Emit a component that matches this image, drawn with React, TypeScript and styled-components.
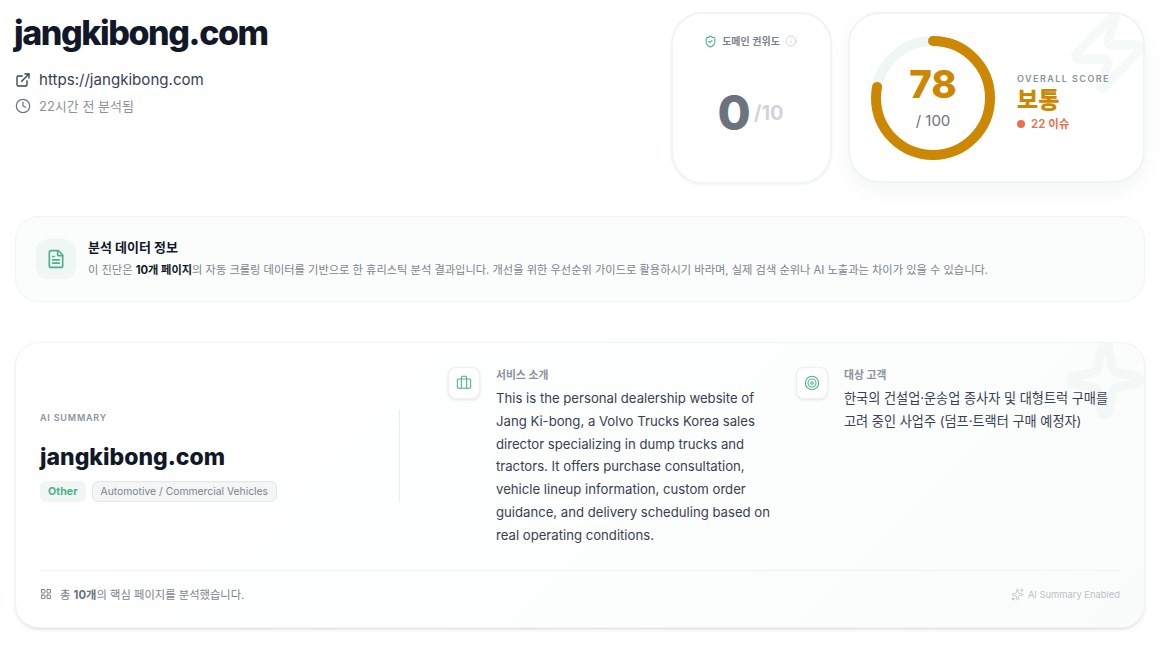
import React from 'react'
import styled, { createGlobalStyle } from 'styled-components'
import { Briefcase, Clock, ExternalLink, FileText, Info, LayoutGrid, ShieldCheck, Sparkle, Sparkles, Target, Zap } from 'lucide-react'

const Global = createGlobalStyle`
  html, body {
    margin: 0;
    background: #fff;
    font-family: Inter, "Noto Sans CJK KR", sans-serif;
    color: #111827;
  }
  * { box-sizing: border-box; }
`

const SCORE = 78
const R = 57
const CIRC = 2 * Math.PI * R

function App() {
  return (
    <Page>
      <Global />
      <Header>
        <SiteInfo>
          <SiteTitle>jangkibong.com</SiteTitle>
          <UrlRow>
            <ExternalLink size={16} strokeWidth={2} color="#374151" />
            <span>https://jangkibong.com</span>
          </UrlRow>
          <TimeRow>
            <Clock size={16} strokeWidth={1.8} color="#6b7280" />
            <span>22시간 전 분석됨</span>
          </TimeRow>
        </SiteInfo>
        <AuthorityCard>
          <AuthorityLabel>
            <ShieldCheck size={13} strokeWidth={2} color="#4cb08a" />
            <span>도메인 권위도</span>
            <Info size={12} strokeWidth={1.6} color="#c4c9cf" />
          </AuthorityLabel>
          <AuthorityValue>
            <strong>0</strong>
            <span>/10</span>
          </AuthorityValue>
        </AuthorityCard>
        <ScoreCard>
          <GhostZap>
            <Zap size={86} strokeWidth={2.6} color="#f5f9f7" />
          </GhostZap>
          <Ring>
            <svg width="124" height="124" viewBox="0 0 124 124">
              <circle cx="62" cy="62" r={R} fill="none" stroke="#f0f6f4" strokeWidth="10" />
              <circle
                cx="62"
                cy="62"
                r={R}
                fill="none"
                stroke="#cd8803"
                strokeWidth="10"
                strokeLinecap="round"
                strokeDasharray={`${(CIRC * SCORE) / 100} ${CIRC}`}
                transform="rotate(-90 62 62)"
              />
            </svg>
            <RingText>
              <RingValue>{SCORE}</RingValue>
              <RingMax>/ 100</RingMax>
            </RingText>
          </Ring>
          <ScoreInfo>
            <ScoreLabel>OVERALL SCORE</ScoreLabel>
            <ScoreGrade>보통</ScoreGrade>
            <IssueRow>
              <IssueDot />
              <span>22 이슈</span>
            </IssueRow>
          </ScoreInfo>
        </ScoreCard>
      </Header>

      <NoticeCard>
        <NoticeIcon>
          <FileText size={20} strokeWidth={2} color="#4cb08a" />
        </NoticeIcon>
        <div>
          <NoticeTitle>분석 데이터 정보</NoticeTitle>
          <NoticeText>
            이 진단은 <b>10개 페이지</b>의 자동 크롤링 데이터를 기반으로 한 휴리스틱 분석 결과입니다. 개선을 위한 우선순위 가이드로 활용하시기 바라며, 실제 검색 순위나 AI 노출과는 차이가 있을 수 있습니다.
          </NoticeText>
        </div>
      </NoticeCard>

      <SummaryCard>
        <GhostSparkle>
          <Sparkle size={84} strokeWidth={2.6} color="#f3f7f6" />
        </GhostSparkle>
        <SummaryBody>
          <SummaryLeft>
            <SummaryEyebrow>AI SUMMARY</SummaryEyebrow>
            <SummaryName>jangkibong.com</SummaryName>
            <TagRow>
              <GreenTag>Other</GreenTag>
              <GrayTag>Automotive / Commercial Vehicles</GrayTag>
            </TagRow>
          </SummaryLeft>
          <SummaryColumn>
            <ColumnIcon>
              <Briefcase size={16} strokeWidth={1.6} color="#4cb08a" />
            </ColumnIcon>
            <div>
              <ColumnLabel>서비스 소개</ColumnLabel>
              <ColumnText>
                This is the personal dealership website of Jang Ki-bong, a Volvo Trucks Korea sales director specializing in dump trucks and tractors. It offers purchase consultation, vehicle lineup information, custom order guidance, and delivery scheduling based on real operating conditions.
              </ColumnText>
            </div>
          </SummaryColumn>
          <SummaryColumn $last>
            <ColumnIcon>
              <Target size={16} strokeWidth={1.6} color="#4cb08a" />
            </ColumnIcon>
            <div>
              <ColumnLabel>대상 고객</ColumnLabel>
              <ColumnText>
                한국의 건설업·운송업 종사자 및 대형트럭 구매를 고려 중인 사업주 (덤프·트랙터 구매 예정자)
              </ColumnText>
            </div>
          </SummaryColumn>
        </SummaryBody>
        <SummaryFooter>
          <FooterNote>
            <LayoutGrid size={12} strokeWidth={1.8} color="#6b7280" />
            <span>
              총 <b>10개</b>의 핵심 페이지를 분석했습니다.
            </span>
          </FooterNote>
          <FooterBadge>
            <Sparkles size={13} strokeWidth={1.6} color="#b9bfc6" />
            <span>AI Summary Enabled</span>
          </FooterBadge>
        </SummaryFooter>
      </SummaryCard>
    </Page>
  )
}

const Page = styled.div`
  width: 1166px;
  height: 648px;
  overflow: hidden;
  padding: 12px 21px 0 15px;
`

const Header = styled.header`
  display: flex;
  align-items: flex-start;
  height: 172px;
`

const SiteInfo = styled.div`
  flex: 1;
`

const SiteTitle = styled.h1`
  margin: 0 0 0 -1px;
  font-size: 34px;
  line-height: 41px;
  font-weight: 800;
  letter-spacing: -1.42px;
  color: #111827;
`

const UrlRow = styled.div`
  display: flex;
  align-items: center;
  gap: 8px;
  margin-top: 15px;
  font-size: 15.1px;
  line-height: 24px;
  color: #374151;
`

const TimeRow = styled.div`
  display: flex;
  align-items: center;
  gap: 8px;
  margin-top: 4px;
  font-size: 13px;
  line-height: 20px;
  color: #8b929c;
`

const AuthorityCard = styled.section`
  width: 161px;
  height: 172px;
  margin-right: 16px;
  padding-top: 20px;
  border: 2px solid #eef5f2;
  border-radius: 32px;
  background: #fff;
  box-shadow: 0 1px 3px rgba(16, 60, 50, 0.06);
`

const AuthorityLabel = styled.div`
  display: flex;
  align-items: center;
  justify-content: center;
  gap: 5px;
  padding-right: 2px;
  font-size: 10px;
  line-height: 14px;
  font-weight: 600;
  color: #7b838d;
`

const AuthorityValue = styled.div`
  display: flex;
  align-items: center;
  justify-content: center;
  margin-top: 35px;
  padding-right: 2px;
  strong {
    font-size: 48px;
    line-height: 60px;
    font-weight: 800;
    color: #6b7280;
  }
  span {
    margin-left: 3px;
    font-size: 20px;
    font-weight: 700;
    color: #d1d5db;
  }
`

const ScoreCard = styled.section`
  position: relative;
  display: flex;
  align-items: center;
  gap: 22px;
  width: 297px;
  height: 171px;
  padding-left: 21px;
  overflow: hidden;
  border: 2px solid #eef5f2;
  border-radius: 32px;
  background: #fff;
  box-shadow: 0 8px 20px rgba(16, 90, 70, 0.05);
`

const GhostZap = styled.div`
  position: absolute;
  top: -5px;
  right: -8px;
  line-height: 0;
`

const Ring = styled.div`
  position: relative;
  width: 124px;
  height: 124px;
  flex: none;
`

const RingText = styled.div`
  position: absolute;
  inset: 0;
  display: flex;
  flex-direction: column;
  align-items: center;
  justify-content: center;
`

const RingValue = styled.div`
  font-size: 38.5px;
  line-height: 40px;
  font-weight: 800;
  color: #cd8803;
`

const RingMax = styled.div`
  margin-top: 7px;
  font-size: 15px;
  line-height: 20px;
  color: #6b7280;
`

const ScoreInfo = styled.div`
  position: relative;
  padding-top: 8px;
`

const ScoreLabel = styled.div`
  font-size: 9px;
  line-height: 13px;
  font-weight: 600;
  letter-spacing: 1.45px;
  color: #8b929c;
`

const ScoreGrade = styled.div`
  margin-top: 1px;
  font-size: 23px;
  line-height: 28px;
  font-weight: 800;
  color: #cd8803;
`

const IssueRow = styled.div`
  display: flex;
  align-items: center;
  gap: 6px;
  margin-top: 2px;
  font-size: 11.5px;
  line-height: 16px;
  font-weight: 600;
  color: #ea6f4f;
`

const IssueDot = styled.i`
  width: 8px;
  height: 8px;
  border-radius: 50%;
  background: #ea6f4f;
`

const NoticeCard = styled.section`
  display: flex;
  align-items: center;
  gap: 12px;
  height: 86px;
  margin-top: 32px;
  padding-left: 20px;
  border: 1px solid #eef5f2;
  border-radius: 24px;
  background: #fbfdfc;
`

const NoticeIcon = styled.div`
  display: flex;
  align-items: center;
  justify-content: center;
  width: 40px;
  height: 40px;
  border-radius: 12px;
  background: #f0f6f4;
`

const NoticeTitle = styled.div`
  font-size: 13px;
  line-height: 18px;
  font-weight: 700;
  color: #111827;
`

const NoticeText = styled.p`
  margin: 6px 0 2px;
  font-size: 11.24px;
  line-height: 16px;
  color: #7b838d;
  b {
    font-weight: 700;
    color: #111827;
  }
`

const SummaryCard = styled.section`
  position: relative;
  height: 286px;
  margin-top: 40px;
  padding: 24px 24px 0;
  overflow: hidden;
  border: 1px solid #eef5f2;
  border-radius: 24px;
  background: linear-gradient(135deg, #fff, #fafcfc);
  box-shadow: 0 2px 4px -2px rgba(16, 50, 45, 0.3);
`

const GhostSparkle = styled.div`
  position: absolute;
  top: -5px;
  right: -3px;
  line-height: 0;
`

const SummaryBody = styled.div`
  position: relative;
  display: flex;
  height: 203px;
`

const SummaryLeft = styled.div`
  display: flex;
  flex-direction: column;
  flex: none;
  width: 360px;
  height: 92px;
  margin: 43px 48px 0 0;
  padding-top: 1px;
  border-right: 1px solid #e8edeb;
`

const SummaryEyebrow = styled.div`
  font-size: 9px;
  line-height: 14px;
  font-weight: 600;
  letter-spacing: 0.8px;
  color: #8b929c;
`

const SummaryName = styled.div`
  margin-top: 18px;
  font-size: 23px;
  line-height: 28px;
  font-weight: 800;
  color: #111827;
`

const TagRow = styled.div`
  display: flex;
  gap: 6px;
  margin-top: 10px;
`

const GreenTag = styled.span`
  padding: 0 8px;
  font-size: 10.7px;
  line-height: 21px;
  font-weight: 700;
  border-radius: 6px;
  color: #4cb08a;
  background: #f0f6f4;
`

const GrayTag = styled.span`
  padding: 0 8px;
  font-size: 10.35px;
  line-height: 19px;
  border: 1px solid #e3e8e6;
  border-radius: 6px;
  color: #7b838d;
  background: #f3f6f5;
`

const SummaryColumn = styled.div<{ $last?: boolean }>`
  display: flex;
  gap: 16px;
  flex: ${({ $last }) => ($last ? '1' : 'none')};
  width: ${({ $last }) => ($last ? 'auto' : '348px')};
`

const ColumnIcon = styled.div`
  display: flex;
  align-items: center;
  justify-content: center;
  flex: none;
  width: 32px;
  height: 32px;
  border: 1px solid #eef1f0;
  border-radius: 8px;
  background: #fff;
  box-shadow: 0 1px 3px rgba(0, 0, 0, 0.1);
`

const ColumnLabel = styled.div`
  padding-top: 2px;
  font-size: 10.8px;
  line-height: 14px;
  font-weight: 600;
  color: #8b929c;
`

const ColumnText = styled.p`
  width: 276px;
  margin: 4px 0 0;
  font-size: 13.15px;
  line-height: 22.8px;
  color: #374151;
`

const SummaryFooter = styled.footer`
  position: relative;
  display: flex;
  align-items: center;
  justify-content: space-between;
  height: 47px;
  border-top: 1px solid #f0f3f2;
`

const FooterNote = styled.div`
  display: flex;
  align-items: center;
  gap: 8px;
  font-size: 11.3px;
  color: #7b838d;
  b {
    font-weight: 700;
    color: #6b7280;
  }
`

const FooterBadge = styled.div`
  display: flex;
  align-items: center;
  gap: 4px;
  font-size: 9.4px;
  color: #b9bfc6;
`

export default App
